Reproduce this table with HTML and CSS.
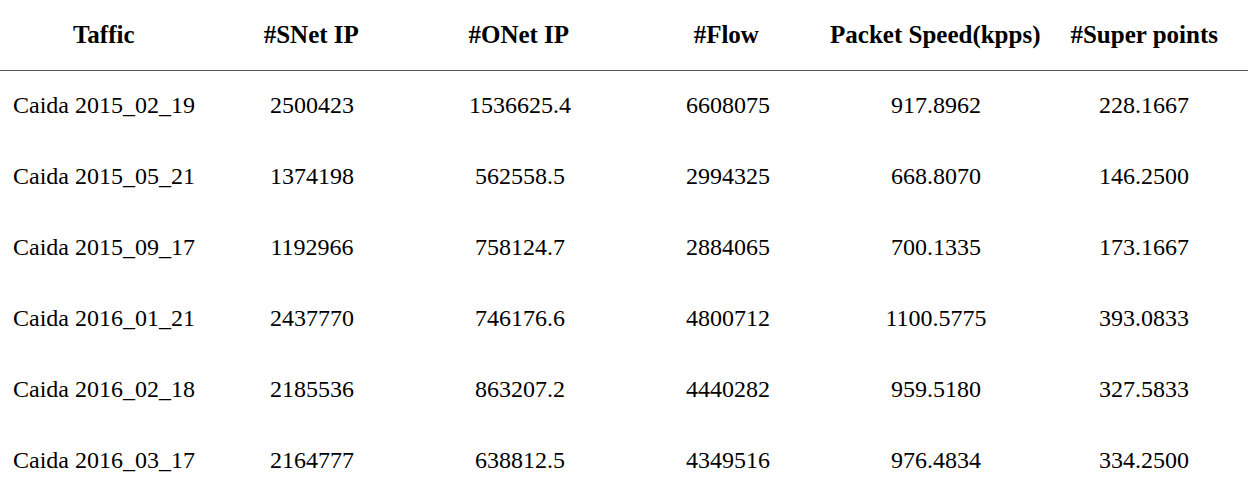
FILE: index.html
```html
<!DOCTYPE html>
<html>
<head>
<meta charset="utf-8">
<link rel="stylesheet" href="styles.css">
</head>
<body>
<div class="table">
  <div class="row head">
    <div class="cell">Taffic</div>
    <div class="cell">#SNet IP</div>
    <div class="cell">#ONet IP</div>
    <div class="cell">#Flow</div>
    <div class="cell">Packet Speed(kpps)</div>
    <div class="cell">#Super points</div>
  </div>
  <div class="row">
    <div class="cell name">Caida 2015_02_19</div>
    <div class="cell">2500423</div>
    <div class="cell">1536625.4</div>
    <div class="cell">6608075</div>
    <div class="cell">917.8962</div>
    <div class="cell">228.1667</div>
  </div>
  <div class="row">
    <div class="cell name">Caida 2015_05_21</div>
    <div class="cell">1374198</div>
    <div class="cell">562558.5</div>
    <div class="cell">2994325</div>
    <div class="cell">668.8070</div>
    <div class="cell">146.2500</div>
  </div>
  <div class="row">
    <div class="cell name">Caida 2015_09_17</div>
    <div class="cell">1192966</div>
    <div class="cell">758124.7</div>
    <div class="cell">2884065</div>
    <div class="cell">700.1335</div>
    <div class="cell">173.1667</div>
  </div>
  <div class="row">
    <div class="cell name">Caida 2016_01_21</div>
    <div class="cell">2437770</div>
    <div class="cell">746176.6</div>
    <div class="cell">4800712</div>
    <div class="cell">1100.5775</div>
    <div class="cell">393.0833</div>
  </div>
  <div class="row">
    <div class="cell name">Caida 2016_02_18</div>
    <div class="cell">2185536</div>
    <div class="cell">863207.2</div>
    <div class="cell">4440282</div>
    <div class="cell">959.5180</div>
    <div class="cell">327.5833</div>
  </div>
  <div class="row">
    <div class="cell name">Caida 2016_03_17</div>
    <div class="cell">2164777</div>
    <div class="cell">638812.5</div>
    <div class="cell">4349516</div>
    <div class="cell">976.4834</div>
    <div class="cell">334.2500</div>
  </div>
</div>
</body>
</html>
```

FILE: styles.css
```css
html, body {
  margin: 0;
  padding: 0;
  background: #ffffff;
}
body {
  font-family: "Liberation Serif", "Times New Roman", serif;
  font-size: 24px;
  color: #000;
  width: 1248px;
  height: 495px;
  overflow: hidden;
}
.table {
  display: flex;
  flex-direction: column;
}
.row {
  display: grid;
  grid-template-columns: repeat(6, 1fr);
  align-items: center;
  box-sizing: border-box;
  height: 71px;
  padding-bottom: 2px;
}
.row.head {
  height: 71px;
  padding-bottom: 0;
  border-bottom: 1px solid #555;
  font-weight: bold;
  font-size: 25px;
}
.cell {
  text-align: center;
  white-space: nowrap;
}
.cell.name {
  text-align: left;
  padding-left: 13px;
}
.cell.speed {
  padding-left: 6px;
}
```
